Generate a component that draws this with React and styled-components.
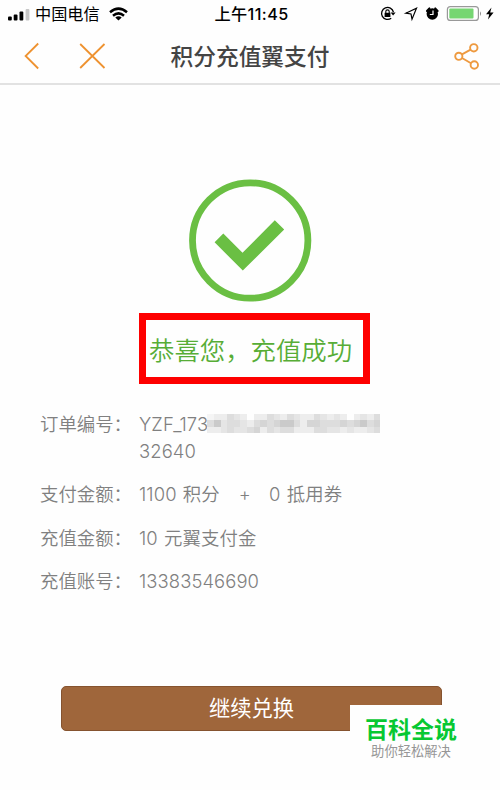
import React from 'react';
import styled, { createGlobalStyle } from 'styled-components';

const GlobalStyle = createGlobalStyle`
  * {
    box-sizing: border-box;
  }

  body {
    margin: 0;
    background: #fefefe;
    font-family: Inter, 'Noto Sans CJK SC', sans-serif;
  }
`;

const StyledScreen = styled.div`
  position: relative;
  display: flex;
  flex-direction: column;
  width: 500px;
  height: 790px;
  overflow: hidden;
  background: #fefefe;
`;

const StyledStatusBar = styled.div`
  display: grid;
  grid-template-columns: 1fr auto 1fr;
  align-items: center;
  height: 28px;
  padding: 0 5px 0 7px;
  color: #000;
  font-size: 16.2px;
  line-height: 28px;
`;

const StyledStatusGroup = styled.div`
  display: flex;
  align-items: center;
  justify-content: ${({ end }) => (end ? 'flex-end' : 'flex-start')};
  height: 28px;
`;

const StyledCarrier = styled.span`
  margin: 0 9px 0 5px;
`;

const StyledTime = styled.div`
  padding-left: 1px;
  font-size: 16.2px;
  font-weight: 500;
  letter-spacing: 0.4px;
`;

const StyledHeader = styled.div`
  display: grid;
  grid-template-columns: 1fr auto 1fr;
  align-items: center;
  height: 57px;
  padding: 0 20px 0 20px;
  border-bottom: 2px solid #e2e2e2;
`;

const StyledActions = styled.div`
  display: flex;
  align-items: center;
  justify-content: ${({ end }) => (end ? 'flex-end' : 'flex-start')};
  gap: 36px;
  padding-left: ${({ end }) => (end ? '0' : '2px')};
`;

const StyledTitle = styled.h1`
  margin: 0;
  padding-top: 2px;
  color: #444;
  font-size: 22.7px;
  font-weight: 500;
  line-height: 32px;
`;

const StyledResult = styled.div`
  display: flex;
  flex-direction: column;
  align-items: center;
  padding-top: 94px;
`;

const StyledSuccess = styled.div`
  width: 231px;
  height: 71px;
  margin: 11px 0 0 9px;
  padding-left: 3px;
  border: 7px solid #fe0000;
  color: #57ad36;
  font-family: 'Noto Sans CJK SC', sans-serif;
  font-size: 25.4px;
  font-weight: 350;
  line-height: 59px;
  white-space: nowrap;
`;

const StyledDetails = styled.div`
  display: flex;
  flex-direction: column;
  gap: 16.3px;
  padding: 27px 40px 0;
  color: #808080;
  font-size: 18.4px;
  font-weight: 350;
  line-height: 27px;
`;

const StyledRow = styled.div`
  display: grid;
  grid-template-columns: 99px 1fr;
`;

const StyledLabel = styled.span`
  white-space: nowrap;
`;

const StyledValue = styled.div`
  letter-spacing: 0.1px;
  word-spacing: 1px;
  white-space: pre;
`;

const StyledLine = styled.div`
  display: flex;
  align-items: center;
`;

const StyledPlus = styled.span`
  margin: 0 18px 0 19px;
`;

const StyledMosaic = styled.div`
  display: grid;
  grid-template-columns: repeat(26, 6.67px);
  grid-template-rows: 6.67px 6.67px 6.67px;
  margin: -2px 0 0 -1px;
`;

const StyledCell = styled.i`
  background: ${({ shade }) => shade};
`;

const StyledButton = styled.button`
  width: 381px;
  height: 45px;
  margin: 91px 0 0 61px;
  padding: 0;
  border: 1px solid #85532f;
  border-radius: 5px;
  background: #9f663b;
  color: #fff;
  font-family: inherit;
  font-size: 21.3px;
  line-height: 43px;
`;

const StyledWatermark = styled.div`
  position: absolute;
  top: 705px;
  left: 350px;
  display: flex;
  flex-direction: column;
  align-items: center;
  width: 150px;
  height: 85px;
  padding: 10px 28px 0 0;
  background: #fefefe;
`;

const StyledBrand = styled.div`
  color: #07c832;
  font-size: 23px;
  font-weight: 700;
  line-height: 30px;
`;

const StyledSlogan = styled.div`
  margin-top: -1px;
  color: #969696;
  font-size: 13.3px;
  line-height: 14px;
`;

// one letter per block, a is the darkest
const SHADES = {
  a: '#cacaca',
  b: '#d5d5d5',
  c: '#dddddd',
  d: '#e5e5e5',
  e: '#ededed',
  f: '#f5f5f5',
  g: '#fefefe',
};

const MOSAIC = [
  'feecdegeecdecdeecdedegedec',
  'cadccdecbcbaacebbcccbcbacb',
  'eedcddcbecdcceeeccddedeedc',
];

const Signal = () => (
  <svg width="23" height="13" viewBox="0 0 23 13">
    <rect x="1" y="8.5" width="3.8" height="4" rx="1" fill="#000" />
    <rect x="6.7" y="6.5" width="3.8" height="6" rx="1" fill="#000" />
    <rect x="12.5" y="3.6" width="3.8" height="8.9" rx="1" fill="#000" />
    <rect x="18.6" y="1" width="3.8" height="11.5" rx="1" fill="#c6c6c6" />
  </svg>
);

const Wifi = () => (
  <svg width="19" height="14" viewBox="0 0 19 14" fill="none" stroke="#000" strokeWidth="2.5">
    <path d="M1 5.2Q9.5 -2 18 5.2" />
    <path d="M4 8.7Q9.5 4 15 8.7" />
    <path d="M6.3 10.5Q9.5 7.8 12.7 10.5L9.5 13.5Z" fill="#000" stroke="none" />
  </svg>
);

const StatusIcons = () => (
  <svg width="116" height="20" viewBox="379 4 116 20" fill="none">
    <path d="M391.2 18.2A6 6 0 1 1 393.4 12" stroke="#000" strokeWidth="1.3" />
    <path d="M390.6 12.4H395.6L393.1 15.6Z" fill="#000" />
    <rect x="384.6" y="12.8" width="5.8" height="4.2" fill="#000" />
    <path d="M385.8 13V11.6A1.7 1.7 0 0 1 389.2 11.6V13" stroke="#000" strokeWidth="1.1" />
    <path d="M405.8 13.2L416.5 8.3L412 19.2L411 14Z" stroke="#000" strokeWidth="1.2" />
    <circle cx="432.3" cy="14" r="5.7" fill="#000" />
    <path d="M427 10.9L429.4 8.4M435.2 8.4L437.6 10.9" stroke="#000" strokeWidth="2.1" strokeLinecap="round" />
    <path d="M433 10.5V14.5H429.8" stroke="#fff" strokeWidth="1.2" />
    <rect x="447.4" y="6.6" width="31" height="13.8" rx="3" fill="#fff" stroke="#999" strokeWidth="1.2" />
    <rect x="449.3" y="8.6" width="24.2" height="9.8" rx="1" fill="#76d672" />
    <path d="M480 11.2Q482 13.5 480 15.9Z" fill="#888" />
    <path d="M491.5 7.6L486 14.3H489.2L488 19.5L493.6 12.4H490.2Z" fill="#000" />
  </svg>
);

const Back = () => (
  <svg width="20" height="28" viewBox="0 0 20 28" fill="none" stroke="#ee9230" strokeWidth="1.8">
    <path d="M16.2 1.5L3.6 14L16.2 26.5" />
  </svg>
);

const Close = () => (
  <svg width="28" height="28" viewBox="0 0 28 28" fill="none" stroke="#ee9230" strokeWidth="1.8">
    <path d="M2.2 2L26.5 26M26.5 2L2.2 26" />
  </svg>
);

const Share = () => (
  <svg width="27" height="28" viewBox="0 0 27 28" fill="none" stroke="#ee9a40" strokeWidth="1.9">
    <circle cx="5.8" cy="14.3" r="3.6" />
    <circle cx="20.8" cy="5.8" r="3.7" />
    <circle cx="21.3" cy="23" r="3.7" />
    <path d="M9 12.4L17.6 7.6M9 16L18 21.2" />
  </svg>
);

const SuccessIcon = () => (
  <svg width="124" height="123" viewBox="0 0 124 123">
    <circle cx="62.2" cy="61.5" r="57.7" fill="none" stroke="#6abf43" strokeWidth="6.8" />
    <path d="M35.3 54.5L54.5 73.7L86.8 41.3L96.2 50.6L54.8 91.6L26.6 63.3Z" fill="#6abf43" />
  </svg>
);

const DetailRow = ({ label, children }) => (
  <StyledRow>
    <StyledLabel>{label}：</StyledLabel>
    <StyledValue>{children}</StyledValue>
  </StyledRow>
);

const HiddenDigits = () => (
  <StyledMosaic>
    {MOSAIC.map((row, y) =>
      row.split('').map((key, x) => <StyledCell key={`${y}-${x + 1}`} shade={SHADES[key]} />),
    )}
  </StyledMosaic>
);

const App = () => (
  <>
    <GlobalStyle />
    <StyledScreen>
      <StyledStatusBar>
        <StyledStatusGroup>
          <Signal />
          <StyledCarrier>中国电信</StyledCarrier>
          <Wifi />
        </StyledStatusGroup>
        <StyledTime>上午11:45</StyledTime>
        <StyledStatusGroup end>
          <StatusIcons />
        </StyledStatusGroup>
      </StyledStatusBar>
      <StyledHeader>
        <StyledActions>
          <Back />
          <Close />
        </StyledActions>
        <StyledTitle>积分充值翼支付</StyledTitle>
        <StyledActions end>
          <Share />
        </StyledActions>
      </StyledHeader>
      <StyledResult>
        <SuccessIcon />
        <StyledSuccess lang="zh-CN">恭喜您，充值成功</StyledSuccess>
      </StyledResult>
      <StyledDetails>
        <DetailRow label="订单编号">
          <StyledLine>
            YZF_173
            <HiddenDigits />
          </StyledLine>
          <StyledLine>32640</StyledLine>
        </DetailRow>
        <DetailRow label="支付金额">
          1100 积分<StyledPlus>+</StyledPlus>0 抵用券
        </DetailRow>
        <DetailRow label="充值金额">10 元翼支付金</DetailRow>
        <DetailRow label="充值账号">13383546690</DetailRow>
      </StyledDetails>
      <StyledButton>继续兑换</StyledButton>
      <StyledWatermark>
        <StyledBrand>百科全说</StyledBrand>
        <StyledSlogan>助你轻松解决</StyledSlogan>
      </StyledWatermark>
    </StyledScreen>
  </>
);

export default App;
